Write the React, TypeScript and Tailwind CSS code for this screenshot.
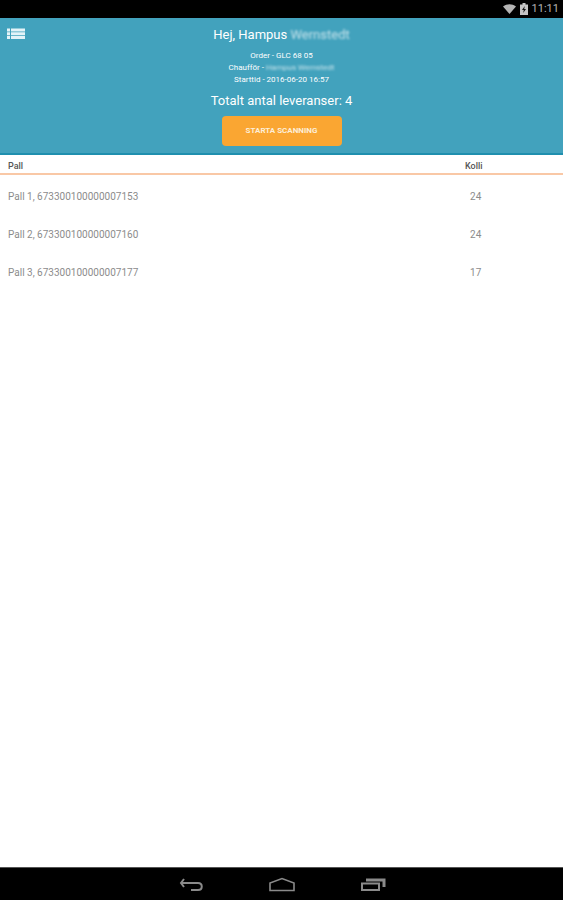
const pallets = [
  { name: "Pall 1, 673300100000007153", count: 24 },
  { name: "Pall 2, 673300100000007160", count: 24 },
  { name: "Pall 3, 673300100000007177", count: 17 },
];

function StatusBar() {
  return (
    <div className="flex h-[18px] shrink-0 items-center justify-end gap-1 bg-black pr-1 text-[11px] leading-4 text-[#b4b4b4]">
      <svg className="h-[10px] w-[13px]" viewBox="0 0 13 10" aria-hidden="true">
        <path d="M0 2.5C4-.6 9-.6 13 2.5L6.5 10Z" fill="#b4b4b4" />
      </svg>
      <svg className="h-[12px] w-[8px]" viewBox="0 0 8 12" aria-hidden="true">
        <path d="M2.5 0h3v1.5H8V12H0V1.5h2.5Z" fill="#c4c4c4" />
        <path d="M4.8 3 2 7h1.8l-.6 3L6 6H4.2Z" fill="#111" />
      </svg>
      <span>11:11</span>
    </div>
  );
}

function Header() {
  return (
    <header className="relative flex h-[137px] shrink-0 flex-col items-center border-b-2 border-[#1f8fae] bg-[#42a2bd] pt-2 text-white">
      <button type="button" aria-label="Meny" className="absolute left-[7px] top-[10px]">
        <svg className="h-[12px] w-[18px]" viewBox="0 0 18 12" fill="#e4f3f8" aria-hidden="true">
          <path d="M0 0.5h3v3H0zM4 0.5h14v3H4zM0 4.3h3v3H0zM4 4.3h14v3H4zM0 8.1h3v3H0zM4 8.1h14v3H4z" />
        </svg>
      </button>
      <h1 className="text-[13px] leading-[18px]">
        Hej, Hampus <span className="opacity-70 blur-[1px]">Wernstedt</span>
      </h1>
      <div className="mt-[6px] text-center text-[8px] leading-[12px]">
        <p>Order - GLC 68 05</p>
        <p>
          Chaufför - <span className="opacity-70 blur-[1px]">Hampus Wernstedt</span>
        </p>
        <p>Starttid - 2016-06-20 16:57</p>
      </div>
      <p className="mt-[6px] text-[13px] leading-[18px]">Totalt antal leveranser: 4</p>
      <button
        type="button"
        className="mt-[6px] h-[30px] w-[120px] shrink-0 rounded-[4px] bg-[#faa632] text-[8px] font-bold text-[#fdeed8]"
      >
        STARTA SCANNING
      </button>
    </header>
  );
}

function PalletTable() {
  return (
    <table className="w-full table-fixed border-separate border-spacing-0 text-[10px] text-[#8c8c8c]">
      <thead>
        <tr className="h-[20px] text-[9px] leading-3 text-[#555]">
          <th className="w-[69%] border-b-2 border-[#f9c8a6] px-2 pt-1 pb-0 text-left font-medium">Pall</th>
          <th className="border-b-2 border-[#f9c8a6] pt-1 pr-1 pb-0 text-center font-medium">Kolli</th>
        </tr>
      </thead>
      <tbody>
        {pallets.map((pallet) => (
          <tr key={pallet.name} className="h-[38px]">
            <td className="px-2 pt-1 pb-0">{pallet.name}</td>
            <td className="px-0 pt-1 pb-0 text-center">{pallet.count}</td>
          </tr>
        ))}
      </tbody>
    </table>
  );
}

function NavigationBar() {
  return (
    <nav className="flex h-[33px] shrink-0 items-center justify-center gap-[65px] border-t border-[#555] bg-black pt-px text-[#8a8a8a]">
      <button type="button" aria-label="Tillbaka">
        <svg className="h-[16px] w-[26px]" viewBox="0 0 26 16" fill="none" stroke="currentColor" strokeWidth="2" aria-hidden="true">
          <path d="M3 6H20C25 6 25 13 20 13H13" />
          <path d="M6 2 3 6l3 4" />
        </svg>
      </button>
      <button type="button" aria-label="Hem">
        <svg className="h-[16px] w-[26px]" viewBox="0 0 26 16" fill="none" stroke="currentColor" strokeWidth="1.6" aria-hidden="true">
          <path d="M1 13.5V6L13 1.5 25 6v7.5Z" />
        </svg>
      </button>
      <button type="button" aria-label="Senaste appar">
        <svg className="h-[16px] w-[26px]" viewBox="0 0 26 16" fill="none" stroke="currentColor" aria-hidden="true">
          <path d="M2 6.5h17V13H2Z" strokeWidth="2" />
          <path d="M6 3h18v7" strokeWidth="3" />
        </svg>
      </button>
    </nav>
  );
}

export default function App() {
  return (
    <div className="flex min-h-screen flex-col bg-white font-[Roboto,sans-serif]">
      <StatusBar />
      <Header />
      <main className="grow">
        <PalletTable />
      </main>
      <NavigationBar />
    </div>
  );
}
